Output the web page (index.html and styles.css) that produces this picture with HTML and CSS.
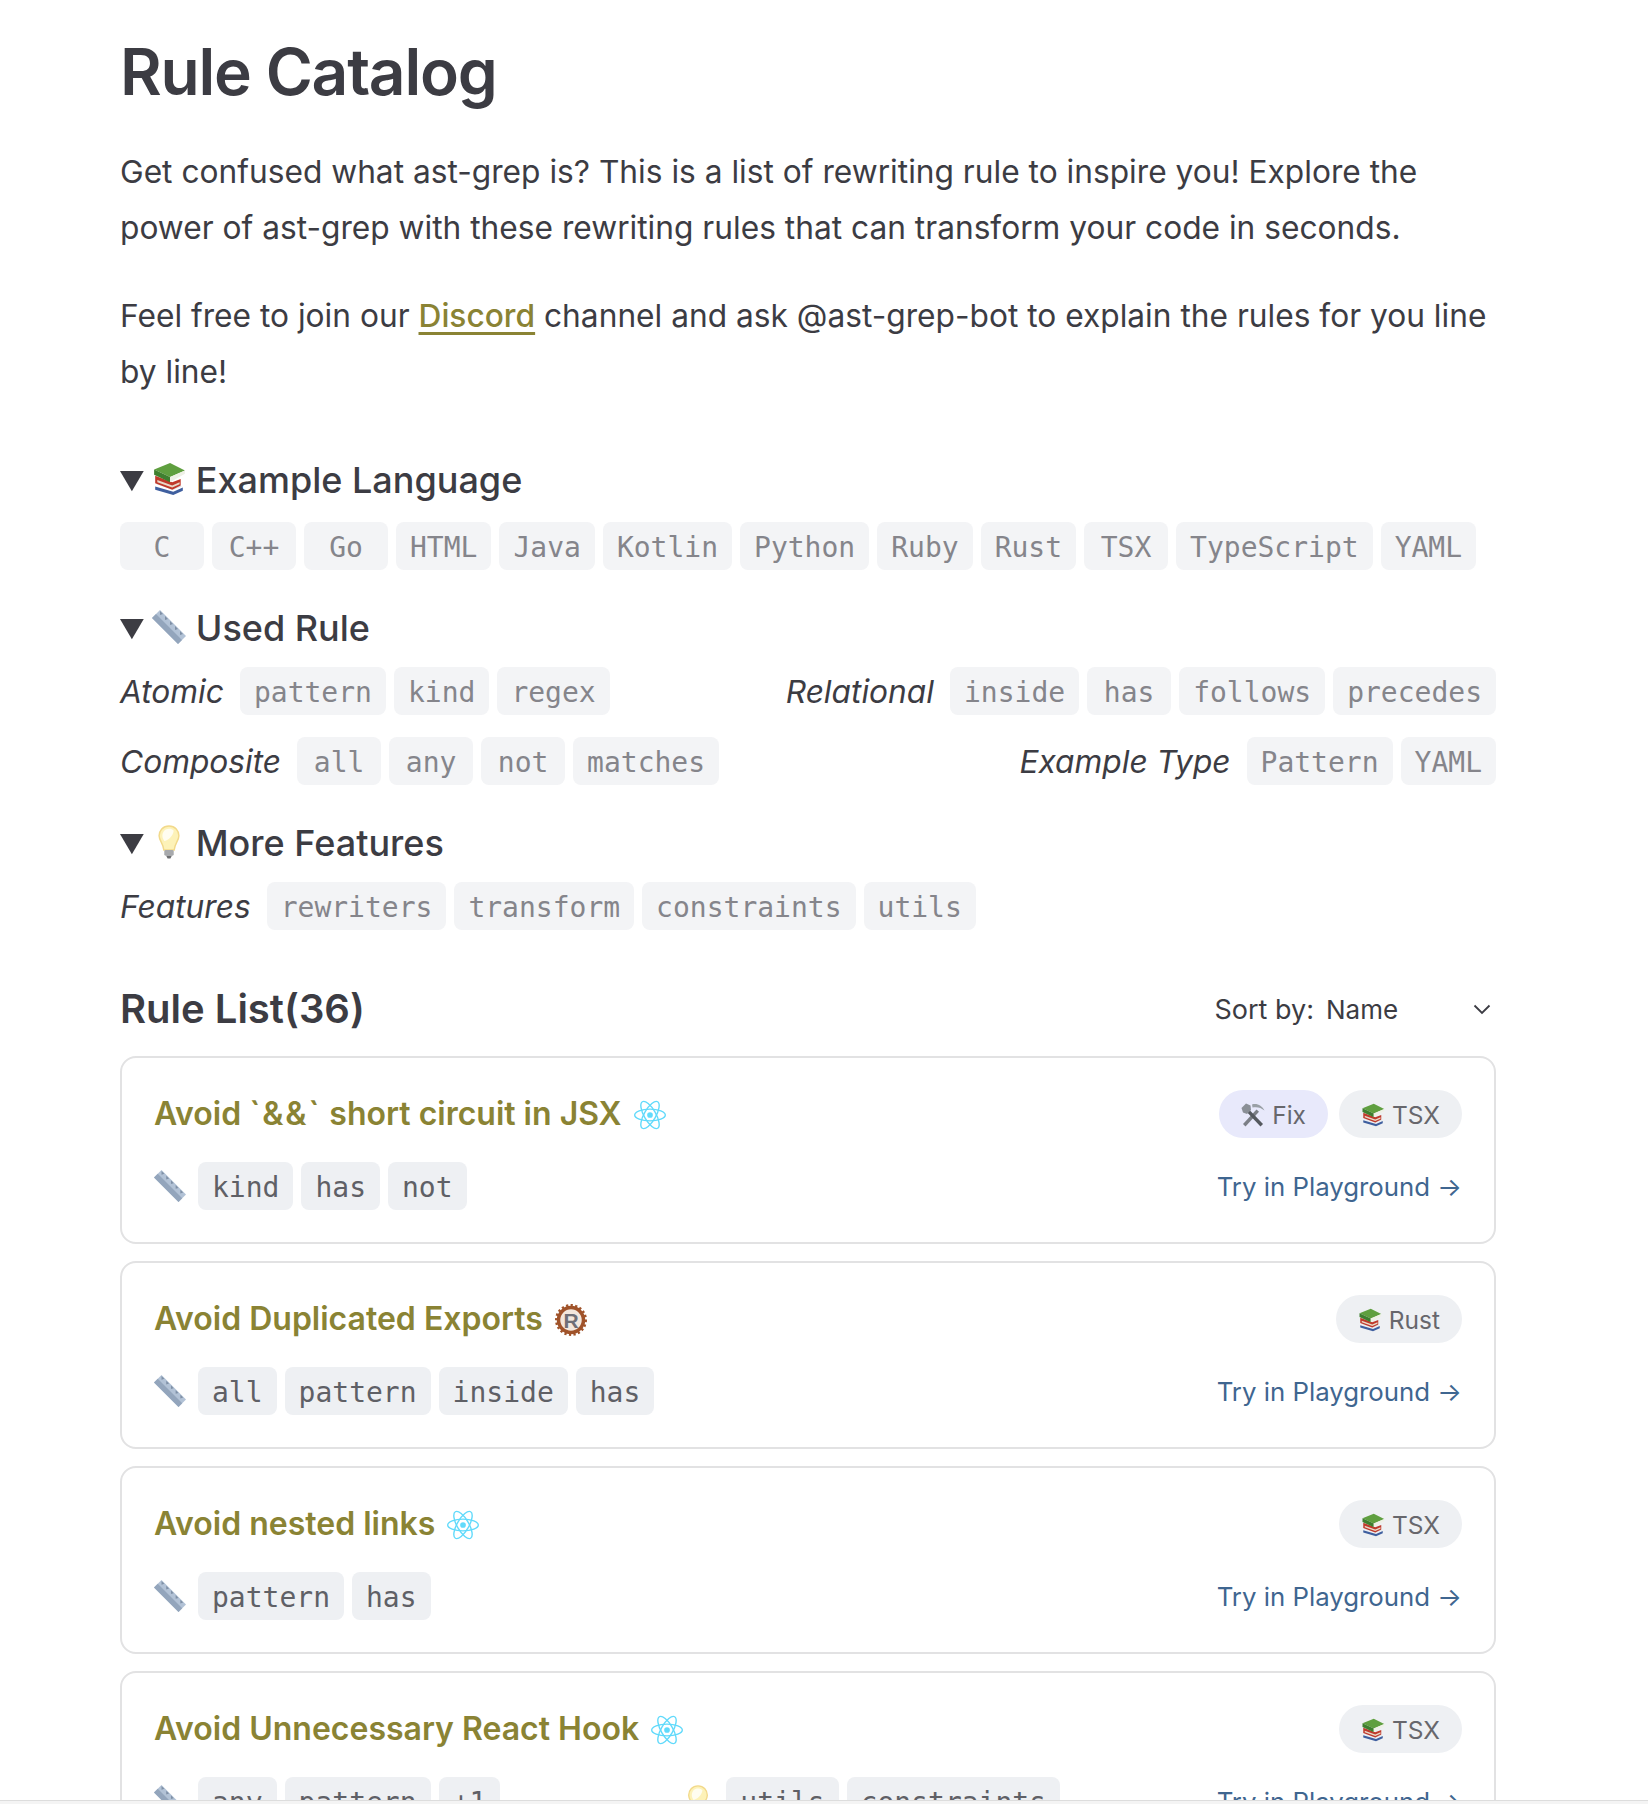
FILE: index.html
```html
<!DOCTYPE html>
<html lang="en">
<head>
    <meta charset="UTF-8">
    <meta name="viewport" content="width=device-width, initial-scale=1.0">
    <title>Rule Catalog</title>
    <link rel="stylesheet" href="styles.css">
</head>
<body>
    <!-- shared emoji drawings -->
    <svg class="icon-defs" xmlns="http://www.w3.org/2000/svg">
        <symbol id="i-books" viewBox="0 0 32 32">
            <path d="M3 23l17 5 9-4v3l-9 4-17-5z" fill="#3f5f9f"/>
            <path d="M4 21l16 5 8-3-3-2-15-1z" fill="#dfe3ea"/>
            <path d="M3 13l16 6 8-3v6l-8 4-16-6z" fill="#c0392b"/>
            <path d="M5 17l14 5 7-3v2l-7 3-14-5z" fill="#e8d9c8"/>
            <path d="M2 7l15-6 14 7-14 6z" fill="#5f9f3f"/>
            <path d="M2 7l15 7v5L2 12z" fill="#3f7f2f"/>
            <path d="M17 14l14-6v3l-14 8z" fill="#eef0e6"/>
        </symbol>
        <symbol id="i-ruler" viewBox="0 0 34 34">
            <path d="M0 8l8-8 26 26-8 8z" fill="#b2c2d6"/>
            <path d="M0 8l4-4 26 26-4 4z" fill="#93a5bc"/>
            <path d="M8 1l3 3-3 1zM13 6l3 3-3 1zM18 11l3 3-3 1zM23 16l3 3-3 1zM28 21l3 3-3 1z" fill="#7f90a6"/>
        </symbol>
        <symbol id="i-bulb" viewBox="0 0 24 36">
            <path d="M12 1C5.500 1 1.500 6 1.500 11.500c0 5 4.500 8 5 15h11c.5-7 5-10 5-15C22.500 6 18.500 1 12 1z" fill="#fdf2b8" stroke="#f2d98a" stroke-width="1.500"/>
            <path d="M12 4c-4 0-7 3-7 7.500 0 2 1 4 2 5.500 4-1 9-5 10-11-1.300-1.300-3-2-5-2z" fill="#fffdf0"/>
            <rect x="7" y="26.500" width="10" height="6" rx="1.500" fill="#a7a9ac"/>
            <path d="M9 32.500h6l-1.500 3h-3z" fill="#6d6e71"/>
        </symbol>
        <symbol id="i-tools" viewBox="0 0 24 24">
            <path d="M2 21L15.500 6.500l2.500 2.300L4.500 23.500z" fill="#7b7f86"/>
            <path d="M11 1.500c5-1.500 10 1 12.500 6-3.500-3-7.500-4-12-3z" fill="#9aa0a6"/>
            <path d="M22 21L8.500 7 6 9.200 19.500 23.500z" fill="#55595f"/>
            <path d="M0.500 5l4.500-4.500 4.500 2 .5 4.500-4 4-4-1.500z" fill="#8a8f96"/>
        </symbol>
        <symbol id="i-react" viewBox="-11.500 -11.500 23 23">
            <circle r="2.050" fill="#61dafb"/>
            <g fill="none" stroke="#61dafb">
                <ellipse rx="11" ry="4.200"/>
                <ellipse rx="11" ry="4.200" transform="rotate(60)"/>
                <ellipse rx="11" ry="4.200" transform="rotate(120)"/>
            </g>
        </symbol>
        <symbol id="i-rust" viewBox="0 0 32 32">
            <circle cx="16" cy="16" r="12.500" fill="#f3e7dc" stroke="#a0532a" stroke-width="3.500"/>
            <circle cx="16" cy="16" r="14.500" fill="none" stroke="#a0532a" stroke-width="3" stroke-dasharray="2.200 2.300"/>
            <text x="16" y="23.500" text-anchor="middle" class="rust-r">R</text>
        </symbol>
    </svg>

    <main class="page">
        <h1 class="title">Rule Catalog</h1>
        <p class="intro">Get confused what ast-grep is? This is a list of rewriting rule to inspire you! Explore the power of ast-grep with these rewriting rules that can transform your code in seconds.</p>
        <p class="intro">Feel free to join our <a href="#" class="link">Discord</a> channel and ask @ast-grep-bot to explain the rules for you line by line!</p>

        <details class="filter" open>
            <summary><svg class="emoji"><use href="#i-books"/></svg> Example Language</summary>
            <div class="tags lang-tags">
                <span class="tag">C</span>
                <span class="tag">C++</span>
                <span class="tag">Go</span>
                <span class="tag">HTML</span>
                <span class="tag">Java</span>
                <span class="tag">Kotlin</span>
                <span class="tag">Python</span>
                <span class="tag">Ruby</span>
                <span class="tag">Rust</span>
                <span class="tag">TSX</span>
                <span class="tag">TypeScript</span>
                <span class="tag">YAML</span>
            </div>
        </details>

        <details class="filter" open>
            <summary><svg class="emoji"><use href="#i-ruler"/></svg> Used Rule</summary>
            <div class="rule-groups">
                <div class="group">
                    <em class="group-name">Atomic</em>
                    <div class="tags"><span class="tag">pattern</span><span class="tag">kind</span><span class="tag">regex</span></div>
                </div>
                <div class="group">
                    <em class="group-name">Relational</em>
                    <div class="tags"><span class="tag">inside</span><span class="tag">has</span><span class="tag">follows</span><span class="tag">precedes</span></div>
                </div>
                <div class="group">
                    <em class="group-name">Composite</em>
                    <div class="tags"><span class="tag">all</span><span class="tag">any</span><span class="tag">not</span><span class="tag">matches</span></div>
                </div>
                <div class="group">
                    <em class="group-name">Example Type</em>
                    <div class="tags"><span class="tag">Pattern</span><span class="tag">YAML</span></div>
                </div>
            </div>
        </details>

        <details class="filter" open>
            <summary><svg class="emoji"><use href="#i-bulb"/></svg> More Features</summary>
            <div class="rule-groups">
                <div class="group">
                    <em class="group-name">Features</em>
                    <div class="tags"><span class="tag">rewriters</span><span class="tag">transform</span><span class="tag">constraints</span><span class="tag">utils</span></div>
                </div>
            </div>
        </details>

        <div class="list-head">
            <h2 class="list-title">Rule List(36)</h2>
            <div class="sort">
                <span>Sort by:</span>
                <span class="sort-value">Name</span>
                <svg class="chevron" viewBox="0 0 18 11"><path d="M1.500 1.500L9 9l7.500-7.500" fill="none" stroke="#3c3c43" stroke-width="1.800"/></svg>
            </div>
        </div>

        <div class="cards">
            <article class="card">
                <div class="card-row">
                    <h3 class="card-title">Avoid <span class="code-ticks">`&amp;&amp;`</span> short circuit in JSX <svg class="logo"><use href="#i-react"/></svg></h3>
                    <div class="badges">
                        <span class="badge badge-fix"><svg class="badge-icon"><use href="#i-tools"/></svg>Fix</span>
                        <span class="badge"><svg class="badge-icon"><use href="#i-books"/></svg>TSX</span>
                    </div>
                </div>
                <div class="card-row card-bottom">
                    <div class="card-tags">
                        <svg class="card-emoji"><use href="#i-ruler"/></svg>
                        <div class="tags"><span class="tag">kind</span><span class="tag">has</span><span class="tag">not</span></div>
                    </div>
                    <a href="#" class="try">Try in Playground →</a>
                </div>
            </article>

            <article class="card">
                <div class="card-row">
                    <h3 class="card-title">Avoid Duplicated Exports <svg class="logo"><use href="#i-rust"/></svg></h3>
                    <div class="badges">
                        <span class="badge"><svg class="badge-icon"><use href="#i-books"/></svg>Rust</span>
                    </div>
                </div>
                <div class="card-row card-bottom">
                    <div class="card-tags">
                        <svg class="card-emoji"><use href="#i-ruler"/></svg>
                        <div class="tags"><span class="tag">all</span><span class="tag">pattern</span><span class="tag">inside</span><span class="tag">has</span></div>
                    </div>
                    <a href="#" class="try">Try in Playground →</a>
                </div>
            </article>

            <article class="card">
                <div class="card-row">
                    <h3 class="card-title">Avoid nested links <svg class="logo"><use href="#i-react"/></svg></h3>
                    <div class="badges">
                        <span class="badge"><svg class="badge-icon"><use href="#i-books"/></svg>TSX</span>
                    </div>
                </div>
                <div class="card-row card-bottom">
                    <div class="card-tags">
                        <svg class="card-emoji"><use href="#i-ruler"/></svg>
                        <div class="tags"><span class="tag">pattern</span><span class="tag">has</span></div>
                    </div>
                    <a href="#" class="try">Try in Playground →</a>
                </div>
            </article>

            <article class="card">
                <div class="card-row">
                    <h3 class="card-title">Avoid Unnecessary React Hook <svg class="logo"><use href="#i-react"/></svg></h3>
                    <div class="badges">
                        <span class="badge"><svg class="badge-icon"><use href="#i-books"/></svg>TSX</span>
                    </div>
                </div>
                <div class="card-row card-bottom">
                    <div class="card-tags">
                        <svg class="card-emoji"><use href="#i-ruler"/></svg>
                        <div class="tags"><span class="tag">any</span><span class="tag">pattern</span><span class="tag">+1</span></div>
                        <svg class="card-emoji card-bulb"><use href="#i-bulb"/></svg>
                        <div class="tags"><span class="tag">utils</span><span class="tag">constraints</span></div>
                    </div>
                    <a href="#" class="try">Try in Playground →</a>
                </div>
            </article>
        </div>
    </main>

    <div class="bottom-strip"></div>
</body>
</html>
```

FILE: styles.css
```css
html, body {
    margin: 0;
    height: 1804px;
    overflow: hidden;
}

body {
    position: relative;
    background-color: #ffffff;
    color: #3c3c43;
    font-family: Inter, "Liberation Sans", sans-serif;
}

.icon-defs {
    display: none;
}

.rust-r {
    font-family: "Liberation Sans", sans-serif;
    font-size: 21px;
    font-weight: 700;
    fill: #6f6f76;
}

/* page column */
.page {
    width: 1376px;
    margin-left: 120px;
}

.title {
    margin: 0;
    padding-top: 34px;
    font-size: 64px;
    line-height: 76px;
    font-weight: 600;
    letter-spacing: -1.200px;
}

.intro {
    margin: 32px 0 0;
    font-size: 31.700px;
    line-height: 56px;
}

.title + .intro {
    margin-top: 34px;
}

.link {
    color: #8a8334;
    font-weight: 500;
    text-decoration: underline;
    text-decoration-thickness: 3px;
    text-underline-offset: 5px;
}

/* filter sections */
.filter {
    margin-top: 34px;
}

.intro + .filter {
    margin-top: 56px;
}

.filter summary {
    font-size: 36px;
    line-height: 48px;
    font-weight: 500;
}

.emoji {
    width: 34px;
    height: 34px;
    margin-left: -6px;
    vertical-align: -3px;
}

.tags {
    display: flex;
    gap: 8px;
}

.lang-tags {
    margin-top: 18px;
}

.tag {
    box-sizing: border-box;
    height: 48px;
    padding: 0 14px;
    border-radius: 8px;
    background-color: #f3f4f6;
    color: #85858b;
    font-family: "DejaVu Sans Mono", monospace;
    font-size: 28px;
    line-height: 52px;
    text-align: center;
}

.filter .tag {
    min-width: 84px;
}

.rule-groups {
    display: flex;
    flex-wrap: wrap;
    justify-content: space-between;
    gap: 22px 8px;
    margin-top: 15px;
}

.group {
    display: flex;
    align-items: center;
    gap: 16px;
}

.group-name {
    font-size: 31.700px;
}

/* rule list header */
.list-head {
    display: flex;
    justify-content: space-between;
    align-items: center;
    margin-top: 51px;
}

.list-title {
    margin: 0;
    font-size: 40px;
    line-height: 56px;
    font-weight: 600;
}

.sort {
    display: flex;
    align-items: center;
    font-size: 27px;
}

.sort-value {
    width: 147px;
    margin-left: 12px;
    font-size: 26px;
}

.chevron {
    width: 18px;
    height: 11px;
    margin-right: 5px;
}

/* cards */
.cards {
    display: flex;
    flex-direction: column;
    gap: 17px;
    margin-top: 19px;
}

.card {
    box-sizing: border-box;
    height: 188px;
    padding: 32px 32px 0;
    border: 2px solid #e2e2e3;
    border-radius: 16px;
}

.card-row {
    display: flex;
    justify-content: space-between;
    align-items: center;
}

.card-bottom {
    margin-top: 24px;
}

.card-title {
    margin: 0;
    color: #8a8334;
    font-size: 32px;
    line-height: 48px;
    font-weight: 600;
}

.code-ticks {
    letter-spacing: 1.800px;
}

.logo {
    width: 32px;
    height: 32px;
    margin-left: 4px;
    vertical-align: -6px;
}

.badges {
    display: flex;
    gap: 11px;
}

.badge {
    box-sizing: border-box;
    display: flex;
    align-items: center;
    gap: 7px;
    height: 48px;
    padding: 2px 22px 0;
    border-radius: 24px;
    background-color: #eef0f3;
    color: #67676c;
    font-size: 24.500px;
}

.badge-fix {
    background-color: #e8e9fb;
}

.badge-icon {
    width: 24px;
    height: 24px;
}

.card-tags {
    display: flex;
    align-items: center;
    gap: 12px;
}

.card-tags .tag {
    background-color: #eef0f3;
    color: #5f6066;
}

.card-emoji {
    width: 32px;
    height: 32px;
}

.card-bulb {
    margin-left: 170px;
}

.try {
    color: #3f6690;
    font-size: 25.800px;
    text-decoration: none;
}

.bottom-strip {
    position: absolute;
    left: 0;
    right: 0;
    bottom: 0;
    height: 3px;
    border-top: 1px solid #dddddd;
    background-color: #f4f4f4;
}
```
